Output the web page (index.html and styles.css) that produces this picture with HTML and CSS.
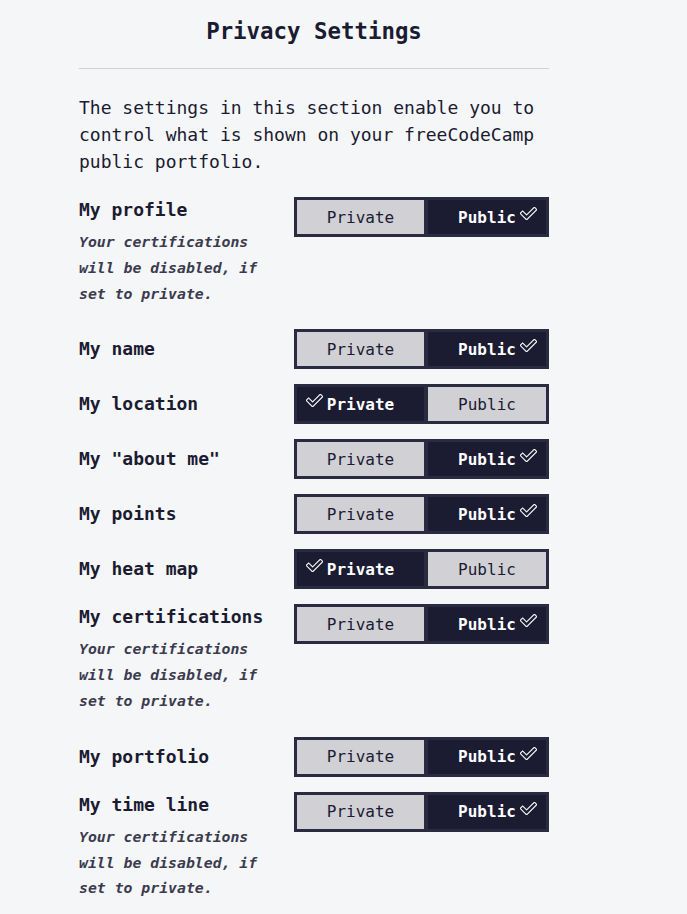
FILE: index.html
```html
<!DOCTYPE html>
<html lang="en">
<head>
<meta charset="utf-8">
<title>Privacy Settings</title>
<link rel="stylesheet" href="styles.css">
</head>
<body>
<svg width="0" height="0" class="defs" aria-hidden="true">
  <defs>
    <symbol id="chk" viewBox="0 0 17 13">
      <path d="M2.6 6.4 L6.6 10.4 L14.4 2.6" fill="none" stroke="#f5f6f7" stroke-width="4.6" stroke-linejoin="miter" stroke-linecap="square"/>
      <path d="M2.6 6.4 L6.6 10.4 L14.4 2.6" fill="none" stroke="#1b1b32" stroke-width="2.3" stroke-linejoin="miter" stroke-linecap="square"/>
    </symbol>
  </defs>
</svg>
<main class="settings">
  <h2 class="title">Privacy Settings</h2>
  <hr class="rule">
  <p class="intro">The settings in this section enable you to control what is shown on your freeCodeCamp public portfolio.</p>

  <div class="row">
    <div class="label-col">
      <div class="label">My profile</div>
      <div class="sub">Your certifications will be disabled, if set to private.</div>
    </div>
    <div class="toggle">
      <div class="btn left">Private</div>
      <div class="btn right on">Public<svg class="chk chk-r"><use href="#chk"/></svg></div>
    </div>
  </div>

  <div class="row">
    <div class="label-col"><div class="label">My name</div></div>
    <div class="toggle">
      <div class="btn left">Private</div>
      <div class="btn right on">Public<svg class="chk chk-r"><use href="#chk"/></svg></div>
    </div>
  </div>

  <div class="row">
    <div class="label-col"><div class="label">My location</div></div>
    <div class="toggle">
      <div class="btn left on"><svg class="chk chk-l"><use href="#chk"/></svg>Private</div>
      <div class="btn right">Public</div>
    </div>
  </div>

  <div class="row">
    <div class="label-col"><div class="label">My "about me"</div></div>
    <div class="toggle">
      <div class="btn left">Private</div>
      <div class="btn right on">Public<svg class="chk chk-r"><use href="#chk"/></svg></div>
    </div>
  </div>

  <div class="row">
    <div class="label-col"><div class="label">My points</div></div>
    <div class="toggle">
      <div class="btn left">Private</div>
      <div class="btn right on">Public<svg class="chk chk-r"><use href="#chk"/></svg></div>
    </div>
  </div>

  <div class="row">
    <div class="label-col"><div class="label">My heat map</div></div>
    <div class="toggle">
      <div class="btn left on"><svg class="chk chk-l"><use href="#chk"/></svg>Private</div>
      <div class="btn right">Public</div>
    </div>
  </div>

  <div class="row">
    <div class="label-col">
      <div class="label">My certifications</div>
      <div class="sub">Your certifications will be disabled, if set to private.</div>
    </div>
    <div class="toggle">
      <div class="btn left">Private</div>
      <div class="btn right on">Public<svg class="chk chk-r"><use href="#chk"/></svg></div>
    </div>
  </div>

  <div class="row">
    <div class="label-col"><div class="label">My portfolio</div></div>
    <div class="toggle">
      <div class="btn left">Private</div>
      <div class="btn right on">Public<svg class="chk chk-r"><use href="#chk"/></svg></div>
    </div>
  </div>

  <div class="row">
    <div class="label-col">
      <div class="label">My time line</div>
      <div class="sub">Your certifications will be disabled, if set to private.</div>
    </div>
    <div class="toggle">
      <div class="btn left">Private</div>
      <div class="btn right on">Public<svg class="chk chk-r"><use href="#chk"/></svg></div>
    </div>
  </div>
</main>
</body>
</html>
```

FILE: styles.css
```css
html, body {
  margin: 0;
  padding: 0;
  background: #f5f6f7;
}
body {
  font-family: "DejaVu Sans Mono", "Liberation Mono", monospace;
  color: #1b1b32;
}
.defs {
  position: absolute;
  width: 0;
  height: 0;
  overflow: hidden;
}
.settings {
  width: 470px;
  margin-left: 79px;
  padding-top: 18px;
}
.title {
  margin: 0;
  font-size: 22.4px;
  line-height: 27px;
  font-weight: bold;
  text-align: center;
  color: #1b1b32;
}
.rule {
  margin: 23px 0 0;
  border: 0;
  border-top: 1px solid #d0d0d5;
  height: 0;
}
.intro {
  margin: 25px 0 22px;
  font-size: 18px;
  line-height: 27px;
  color: #1b1b32;
}
.row {
  display: flex;
  justify-content: space-between;
  align-items: flex-start;
  margin-bottom: 15px;
}
.label-col {
  width: 200px;
  min-height: 40px;
  display: flex;
  flex-direction: column;
  justify-content: center;
}
.label {
  font-size: 18px;
  line-height: 26px;
  font-weight: bold;
  color: #1b1b32;
}
.sub {
  margin-top: 6px;
  margin-bottom: 8px;
  font-size: 14.8px;
  line-height: 25.8px;
  font-weight: bold;
  font-style: italic;
  color: #3b3b4f;
}
.toggle {
  display: flex;
  gap: 4px;
  width: 249px;
  height: 34px;
  border: 3px solid #2a2a40;
  background: #2a2a40;
}
.btn {
  position: relative;
  display: flex;
  align-items: center;
  justify-content: center;
  height: 34px;
  background: #d0d0d5;
  color: #1b1b32;
  font-size: 16px;
}
.btn.left { width: 127px; }
.btn.right { width: 118px; }
.btn.on {
  background: #1b1b32;
  color: #ffffff;
  font-weight: bold;
}
.chk {
  position: absolute;
  top: 7px;
  width: 17px;
  height: 13px;
}
.chk-r { right: 9px; }
.chk-l { left: 9px; }
```
